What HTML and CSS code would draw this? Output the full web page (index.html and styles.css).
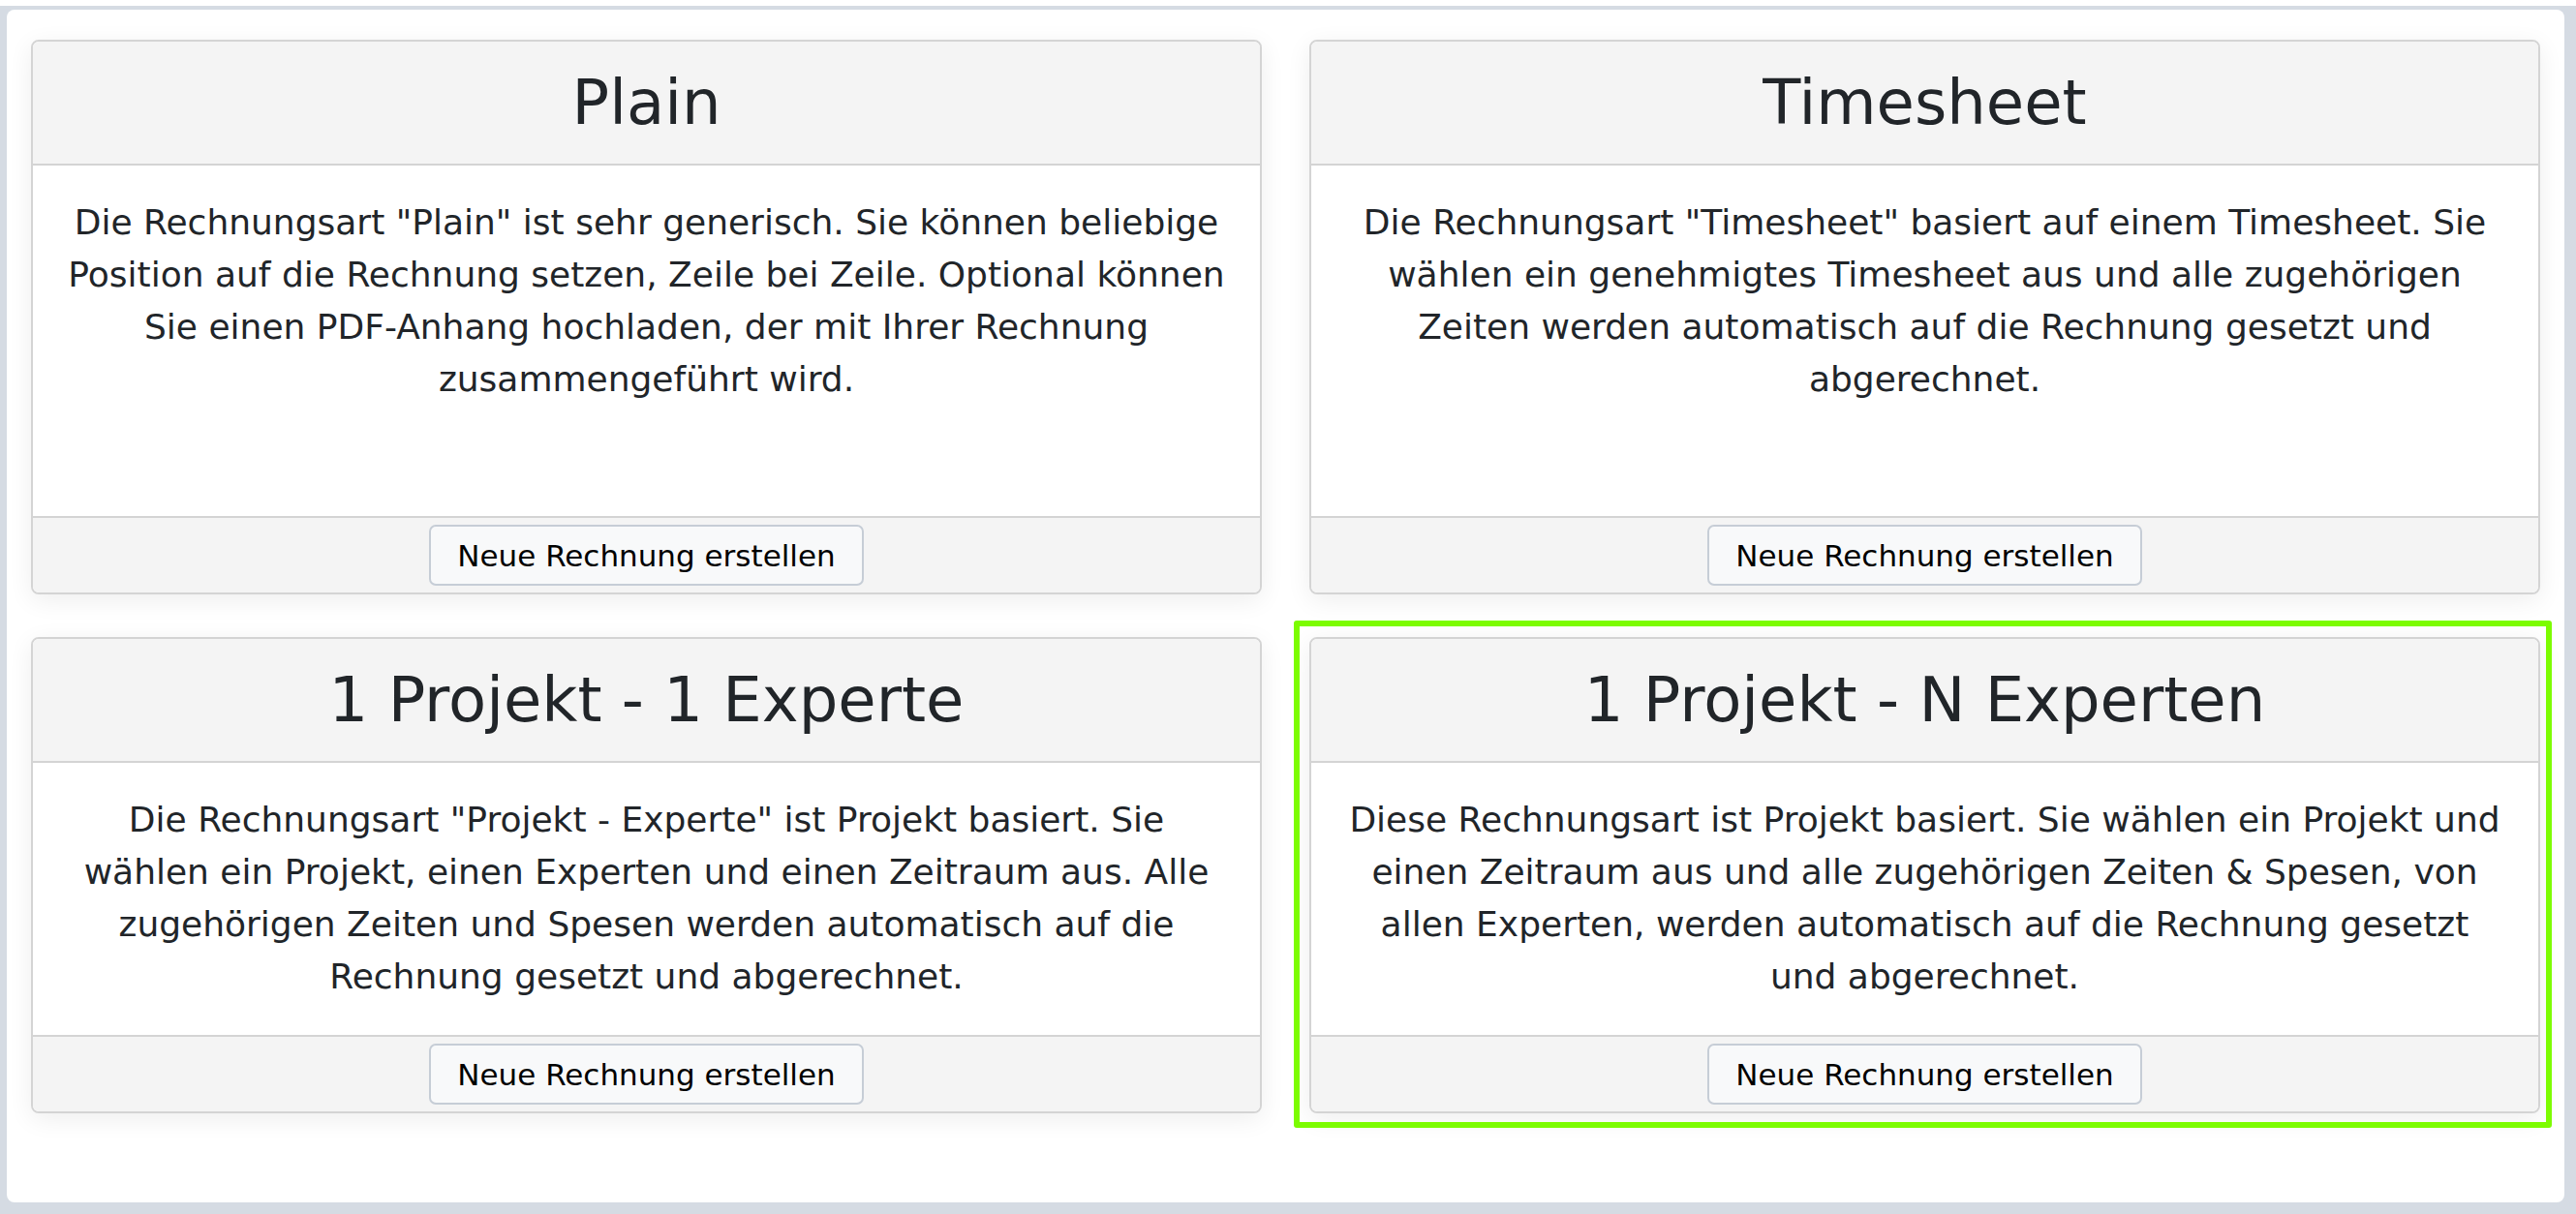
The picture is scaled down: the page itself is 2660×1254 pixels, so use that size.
FILE: index.html
```html
<!DOCTYPE html>
<html lang="de">
<head>
<meta charset="utf-8">
<title>Rechnungsart wählen</title>
<link rel="stylesheet" href="styles.css">
</head>
<body>
<div class="top-strip"></div>
<main class="panel">
  <div class="grid">
    <section class="card">
      <header class="card-header"><h2>Plain</h2></header>
      <div class="card-body">
        <p>Die Rechnungsart "Plain" ist sehr generisch. Sie können beliebige Position auf die Rechnung setzen, Zeile bei Zeile. Optional können Sie einen PDF-Anhang hochladen, der mit Ihrer Rechnung zusammengeführt wird.</p>
      </div>
      <footer class="card-footer"><button class="btn">Neue Rechnung erstellen</button></footer>
    </section>
    <section class="card">
      <header class="card-header"><h2>Timesheet</h2></header>
      <div class="card-body">
        <p>Die Rechnungsart "Timesheet" basiert auf einem Timesheet. Sie wählen ein genehmigtes Timesheet aus und alle zugehörigen Zeiten werden automatisch auf die Rechnung gesetzt und abgerechnet.</p>
      </div>
      <footer class="card-footer"><button class="btn">Neue Rechnung erstellen</button></footer>
    </section>
    <section class="card">
      <header class="card-header"><h2>1 Projekt - 1 Experte</h2></header>
      <div class="card-body">
        <p>Die Rechnungsart "Projekt - Experte" ist Projekt basiert. Sie wählen ein Projekt, einen Experten und einen Zeitraum aus. Alle zugehörigen Zeiten und Spesen werden automatisch auf die Rechnung gesetzt und abgerechnet.</p>
      </div>
      <footer class="card-footer"><button class="btn">Neue Rechnung erstellen</button></footer>
    </section>
    <section class="card selected">
      <header class="card-header"><h2>1 Projekt - N Experten</h2></header>
      <div class="card-body">
        <p>Diese Rechnungsart ist Projekt basiert. Sie wählen ein Projekt und einen Zeitraum aus und alle zugehörigen Zeiten &amp; Spesen, von allen Experten, werden automatisch auf die Rechnung gesetzt und abgerechnet.</p>
      </div>
      <footer class="card-footer"><button class="btn">Neue Rechnung erstellen</button></footer>
    </section>
  </div>
</main>
</body>
</html>
```
FILE: styles.css
```css
* { box-sizing: border-box; }

html, body {
  margin: 0;
  padding: 0;
}

body {
  background: #d5dbe3;
  font-family: "DejaVu Sans", Verdana, sans-serif;
  color: #212529;
  width: 2660px;
  height: 1254px;
  overflow: hidden;
}

.top-strip {
  height: 6px;
  background: #ffffff;
}

.panel {
  margin: 4px 12px 0 7px;
  height: 1232px;
  background: #ffffff;
  border-radius: 8px;
  padding: 31px 25px 0 25px;
}

.grid {
  display: grid;
  grid-template-columns: 1271px 1271px;
  grid-template-rows: 573px 492px;
  column-gap: 49px;
  row-gap: 44px;
}

.card {
  position: relative;
  display: flex;
  flex-direction: column;
  border: 2px solid #d4d4d4;
  border-radius: 8px;
  background: #ffffff;
  box-shadow: 0 6px 26px rgba(0, 0, 0, 0.07);
}

.card.selected::before {
  content: "";
  position: absolute;
  top: -19px;
  left: -18px;
  right: -14px;
  bottom: -17px;
  border: 6px solid #7cfc00;
  border-radius: 3px;
  pointer-events: none;
}

.card-header {
  background: #f4f4f4;
  border-bottom: 2px solid #d4d4d4;
  border-radius: 6px 6px 0 0;
  height: 128px;
  display: flex;
  align-items: center;
  justify-content: center;
}

.card-header h2 {
  margin: 0;
  font-size: 64px;
  font-weight: normal;
  line-height: 1.2;
}

.card-body {
  flex: 1;
  padding: 32px 36px 30px;
}

.card-body p {
  margin: 0;
  font-size: 36px;
  line-height: 54px;
  text-align: center;
}

.card-footer {
  background: #f4f4f4;
  border-top: 2px solid #d4d4d4;
  border-radius: 0 0 6px 6px;
  height: 79px;
  display: flex;
  align-items: center;
  justify-content: center;
}

.btn {
  font-family: "DejaVu Sans", Verdana, sans-serif;
  font-size: 31px;
  line-height: 46px;
  color: #000000;
  background: #f8f9fa;
  border: 2px solid #c6cdd6;
  border-radius: 7px;
  padding: 7px 27px;
  height: 63px;
}
```
